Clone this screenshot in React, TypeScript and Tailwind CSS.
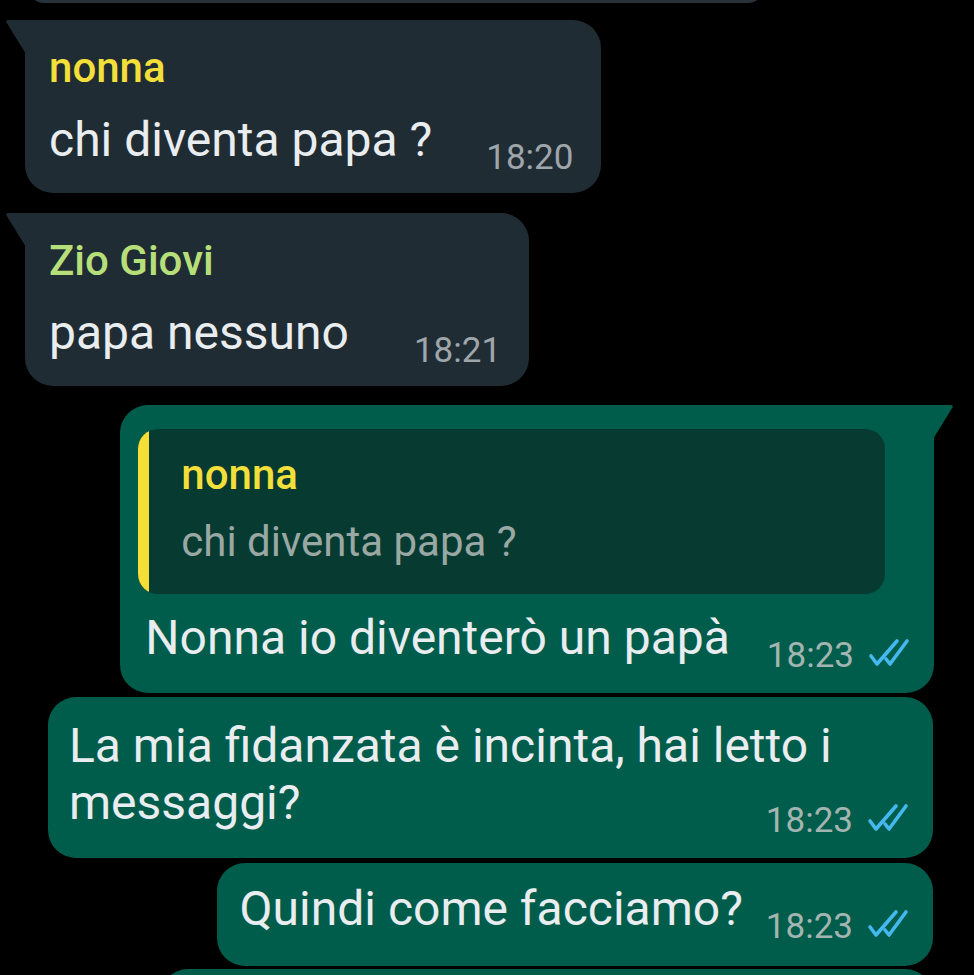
import React from "react";

const Ticks = () => (
  <svg width="42" height="29" viewBox="0 0 42 29" className="mb-[9px] shrink-0">
    <path d="M3 18 L9 26 L29 3" stroke="#44b8ef" strokeWidth="3.6" fill="none" strokeLinecap="round" strokeLinejoin="round" />
    <path d="M18 21 L22 26 L39 3" stroke="#44b8ef" strokeWidth="3.6" fill="none" strokeLinecap="round" strokeLinejoin="round" />
  </svg>
);

const InTail = () => (
  <svg width="21" height="34" viewBox="0 0 21 34" className="absolute left-[-20px] top-0">
    <path d="M21 0 H3.5 Q0 0 1.8 3 L21 34 Z" fill="#202c33" />
  </svg>
);

const OutTail = () => (
  <svg width="21" height="34" viewBox="0 0 21 34" className="absolute right-[-20px] top-0">
    <path d="M0 0 H17.5 Q21 0 19.2 3 L0 34 Z" fill="#005c4b" />
  </svg>
);

export default function App() {
  return (
    <div className="w-[974px] h-[975px] overflow-hidden bg-black flex flex-col font-['Roboto',sans-serif]">
      {/* previous bubble sliver */}
      <div className="ml-[25px] mt-[-37px] h-[40px] w-[742px] shrink-0 rounded-[28px] bg-[#28323a]" />

      {/* nonna */}
      <div className="relative ml-[25px] mt-[17px] self-start rounded-[28px] rounded-tl-none bg-[#202c33] pl-[24px] pr-[28px] pt-[24px] pb-[25px]">
        <InTail />
        <div className="text-[42px] leading-[48px] font-medium text-[#f3df3a]">nonna</div>
        <div className="mt-[19px] flex items-end">
          <span className="text-[48px] leading-[57px] text-[#e9edef]">chi diventa papa ?</span>
          <span className="ml-[54px] translate-y-[10px] text-[35px] leading-[40px] text-[#9ea6ab]">18:20</span>
        </div>
      </div>

      {/* Zio Giovi */}
      <div className="relative ml-[25px] mt-[20px] self-start rounded-[28px] rounded-tl-none bg-[#202c33] pl-[24px] pr-[28px] pt-[24px] pb-[25px]">
        <InTail />
        <div className="text-[42px] leading-[48px] font-medium text-[#b6df79]">Zio Giovi</div>
        <div className="mt-[19px] flex items-end">
          <span className="text-[48px] leading-[57px] text-[#e9edef]">papa nessuno</span>
          <span className="ml-[65px] translate-y-[10px] text-[35px] leading-[40px] text-[#9ea6ab]">18:21</span>
        </div>
      </div>

      {/* reply */}
      <div className="relative mr-[40px] mt-[19px] self-end rounded-[28px] rounded-tr-none bg-[#005c4b] pl-[18px] pr-[24px] pt-[24px] pb-[27px]">
        <OutTail />
        <div className="flex h-[165px] w-[747px] overflow-hidden rounded-[20px] bg-[#073b32]">
          <div className="w-[11px] shrink-0 bg-[#f5de36]" />
          <div className="pl-[32px] pt-[22px]">
            <div className="text-[42px] leading-[48px] font-medium text-[#f3df3a]">nonna</div>
            <div className="mt-[18px] text-[42px] leading-[50px] text-[#9aa8a4]">chi diventa papa ?</div>
          </div>
        </div>
        <div className="mt-[15px] ml-[7px] flex items-end">
          <span className="text-[48px] leading-[57px] text-[#e9edef]">Nonna io diventerò un papà</span>
          <span className="ml-[37px] flex translate-y-[10px] items-end gap-[14px]">
            <span className="text-[35px] leading-[40px] text-[#a3b5b0]">18:23</span>
            <Ticks />
          </span>
        </div>
      </div>

      {/* La mia fidanzata */}
      <div className="ml-[48px] mr-[41px] mt-[4px] rounded-[28px] bg-[#005c4b] pl-[21px] pr-[24px] pt-[20px] pb-[27px]">
        <div className="text-[48px] leading-[57px] text-[#e9edef]">La mia fidanzata è incinta, hai letto i</div>
        <div className="flex items-end justify-between">
          <span className="text-[48px] leading-[57px] text-[#e9edef]">messaggi?</span>
          <span className="flex translate-y-[10px] items-end gap-[14px]">
            <span className="text-[35px] leading-[40px] text-[#a3b5b0]">18:23</span>
            <Ticks />
          </span>
        </div>
      </div>

      {/* Quindi */}
      <div className="mr-[41px] mt-[5px] self-end rounded-[28px] bg-[#005c4b] pl-[23px] pr-[24px] pt-[17px] pb-[29px]">
        <div className="flex items-end">
          <span className="text-[48px] leading-[57px] text-[#e9edef]">Quindi come facciamo?</span>
          <span className="ml-[23px] flex translate-y-[10px] items-end gap-[14px]">
            <span className="text-[35px] leading-[40px] text-[#a3b5b0]">18:23</span>
            <Ticks />
          </span>
        </div>
      </div>

      {/* next bubble sliver */}
      <div className="mr-[41px] mt-[3px] h-[60px] w-[773px] shrink-0 self-end rounded-[28px] bg-[#005c4b]" />
    </div>
  );
}
